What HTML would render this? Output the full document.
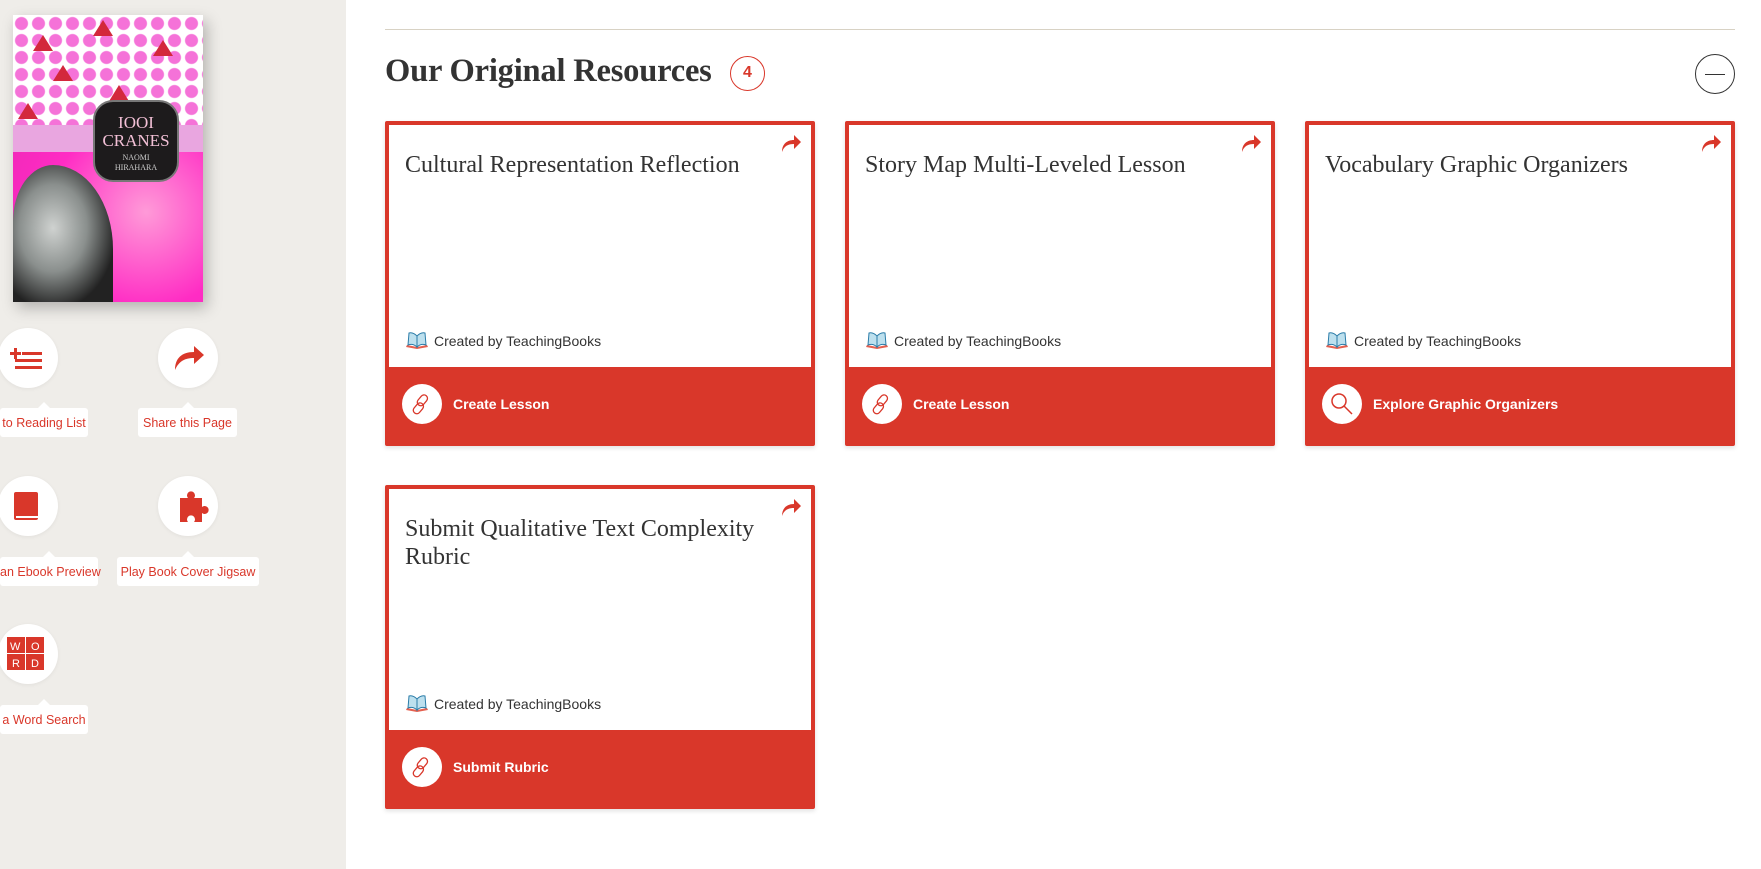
<!DOCTYPE html>
<html><head><meta charset="utf-8"><style>
*{box-sizing:border-box;margin:0;padding:0}
body{width:1761px;height:869px;overflow:hidden;background:#fff;font-family:"Liberation Sans",sans-serif;position:relative}
.side{position:absolute;left:0;top:0;width:346px;height:869px;background:#efede9}
.cover{position:absolute;left:13px;top:15px;width:190px;height:287px;box-shadow:4px 6px 14px rgba(0,0,0,.25);overflow:hidden;
background:#ff3fc8}
.dots{position:absolute;left:0;top:0;width:190px;height:110px;background-color:#fff;
background-image:radial-gradient(circle,#f572d8 6px,transparent 7px);background-size:17px 17px}
.band{position:absolute;left:0;top:110px;width:190px;height:27px;background:#e9a6e0}
.mag{position:absolute;left:0;top:137px;width:190px;height:150px;background:radial-gradient(circle at 70% 40%,#ff9ad8,#ff2cc4 60%,#f028b8)}
.face{position:absolute;left:0;top:150px;width:100px;height:140px;background:radial-gradient(ellipse at 40% 45%,#cfd2d0 0,#8a8f8d 40%,#222 75%);border-radius:40% 60% 0 0}
.lbl{position:absolute;left:80px;top:85px;width:86px;height:82px;background:#1d1b1c;border-radius:20px;border:2px solid #777;color:#f2c0d6;font-family:"Liberation Serif",serif;text-align:center;font-size:17px;line-height:18px;padding-top:12px}
.crane{position:absolute;width:0;height:0;border-left:10px solid transparent;border-right:10px solid transparent;border-bottom:16px solid #d3283c}
.ic{position:absolute;width:60px;height:60px;border-radius:50%;background:#fff;box-shadow:0 1px 4px rgba(0,0,0,.06)}
.tag{position:absolute;height:29px;background:#fff;border-radius:3px;color:#d9372a;font-size:12.5px;line-height:31px;text-align:center;white-space:nowrap}
.tag:before{content:"";position:absolute;top:-6px;left:50%;margin-left:-6px;border-left:6px solid transparent;border-right:6px solid transparent;border-bottom:6px solid #fff}
.line{position:absolute;left:385px;top:29px;width:1350px;height:1px;background:#d8d2c4}
h2{position:absolute;left:385px;top:53px;font-family:"Liberation Serif",serif;font-size:32.5px;font-weight:bold;color:#333;letter-spacing:-0.2px}
.badge{position:absolute;left:730px;top:56px;width:35px;height:35px;border:1.5px solid #d9372a;border-radius:50%;color:#d9372a;text-align:center;line-height:32px;font-size:16px;font-weight:bold}
.minus{position:absolute;left:1695px;top:54px;width:40px;height:40px;border:1.2px solid #333;border-radius:50%}
.minus:after{content:"";position:absolute;left:9px;top:19px;width:20px;height:1px;background:#333}
.card{position:absolute;width:430px;border:4px solid #d9372a;border-radius:2px;background:#fff;box-shadow:0 2px 5px rgba(0,0,0,.12)}
.card .t{position:absolute;left:16px;top:26px;right:50px;font-family:"Liberation Serif",serif;font-size:24px;line-height:28px;color:#333}
.card .sh{position:absolute;right:10px;top:10px}
.card .cb{position:absolute;left:16px;font-size:14px;color:#333}
.card .cb svg{vertical-align:-4px;margin-right:5px}
.card .ft{position:absolute;left:0;right:0;bottom:0;height:75px;background:#d9372a}
.card .ft .c{position:absolute;left:13px;top:17px;width:40px;height:40px;border-radius:50%;background:#fff}
.card .ft span{position:absolute;left:64px;top:29px;color:#fff;font-size:14px;font-weight:bold}
</style></head><body>
<div class="side">
 <div class="cover">
  <div class="dots"></div>
  <div class="crane" style="left:20px;top:20px"></div><div class="crane" style="left:80px;top:5px"></div><div class="crane" style="left:140px;top:25px"></div>
  <div class="crane" style="left:40px;top:50px"></div><div class="crane" style="left:90px;top:70px;border-bottom-width:26px;border-left-width:16px;border-right-width:16px"></div><div class="crane" style="left:5px;top:88px"></div>
  <div class="band"></div>
  <div class="mag"></div>
  <div class="face"></div>
  <div class="lbl">IOOI<br>CRANES<div style="font-size:8px;line-height:10px;color:#ccc;margin-top:3px">NAOMI<br>HIRAHARA</div></div>
 </div>
 <div class="ic" style="left:-2px;top:328px"><svg width="60" height="60"><g fill="#d9372a"><rect x="12" y="24" width="11" height="3"/><rect x="16" y="20" width="3" height="11"/><rect x="24" y="24" width="20" height="3"/><rect x="17" y="31" width="27" height="3"/><rect x="17" y="38" width="27" height="3"/></g></svg></div>
 <div class="tag" style="left:0;top:408px;width:88px">to Reading List</div>
 <div class="ic" style="left:158px;top:328px"><svg width="60" height="60"><path d="M17 42 C17 30 24 24 36 24 L36 18 L46 27 L36 36 L36 30 C27 30 21 33 17 42Z" fill="#d9372a"/></svg></div>
 <div class="tag" style="left:138px;top:408px;width:99px">Share this Page</div>
 <div class="ic" style="left:-2px;top:476px"><svg width="60" height="60"><rect x="16" y="16" width="24" height="28" rx="2" fill="#d9372a"/><rect x="18" y="40" width="22" height="2" fill="#fff"/></svg></div>
 <div class="tag" style="left:0;top:557px;width:98px">an Ebook Preview</div>
 <div class="ic" style="left:158px;top:476px"><svg width="60" height="60"><path d="M22 22h8a4 4 0 1 1 6 0h8v9a4 4 0 1 1 0 6v9h-8a4 4 0 1 0-6 0h-8z" fill="#d9372a"/></svg></div>
 <div class="tag" style="left:117px;top:557px;width:142px">Play Book Cover Jigsaw</div>
 <div class="ic" style="left:-2px;top:624px"><svg width="60" height="60" font-family="Liberation Sans" font-size="11" fill="#fff"><rect x="9" y="13" width="18" height="16" fill="#d9372a"/><rect x="28" y="13" width="18" height="16" fill="#d9372a"/><rect x="9" y="30" width="18" height="16" fill="#d9372a"/><rect x="28" y="30" width="18" height="16" fill="#d9372a"/><text x="12" y="26">W</text><text x="33" y="26">O</text><text x="14" y="43">R</text><text x="33" y="43">D</text></svg></div>
 <div class="tag" style="left:0;top:705px;width:88px">a Word Search</div>
</div>

<div class="line"></div>
<h2>Our Original Resources</h2>
<div class="badge">4</div>
<div class="minus"></div>

<svg width="0" height="0" style="position:absolute"><defs>
<symbol id="sh" viewBox="0 0 20 18"><path d="M1 17 C1 9 6 5 13 5 L13 0 L20 7 L13 14 L13 9 C7 9 3 11 1 17Z" fill="#d9372a"/></symbol>
<symbol id="bk" viewBox="0 0 24 20"><path d="M1 17 L12 19 L23 17 L22 15 L12 17 L2 15Z" fill="#e4604f"/><path d="M3 15 L4 3 Q8 2 12 6 L12 17 Q8 13 3 15Z M12 6 Q16 2 20 3 L21 15 Q16 13 12 17Z" fill="#bde0ee" stroke="#2a7ca8" stroke-width="1"/></symbol>
<symbol id="lk" viewBox="0 0 40 40"><g fill="none" stroke="#d9372a" stroke-width="1.3"><rect x="17" y="10" width="7" height="12" rx="3.5" transform="rotate(40 20 16)"/><rect x="13" y="18" width="7" height="12" rx="3.5" transform="rotate(40 16 24)"/></g></symbol>
<symbol id="mg" viewBox="0 0 40 40"><g fill="none" stroke="#d9372a" stroke-width="1.5"><circle cx="17" cy="17" r="7"/><path d="M22 22 L30 30"/></g></symbol>
</defs></svg>

<div class="card" style="left:385px;top:121px;height:325px"><svg class="sh" width="20" height="18"><use href="#sh"/></svg><div class="t">Cultural Representation Reflection</div><div class="cb" style="top:205px"><svg width="24" height="20"><use href="#bk"/></svg>Created by TeachingBooks</div><div class="ft"><div class="c"><svg width="40" height="40"><use href="#lk"/></svg></div><span>Create Lesson</span></div></div>
<div class="card" style="left:845px;top:121px;height:325px"><svg class="sh" width="20" height="18"><use href="#sh"/></svg><div class="t">Story Map Multi-Leveled Lesson</div><div class="cb" style="top:205px"><svg width="24" height="20"><use href="#bk"/></svg>Created by TeachingBooks</div><div class="ft"><div class="c"><svg width="40" height="40"><use href="#lk"/></svg></div><span>Create Lesson</span></div></div>
<div class="card" style="left:1305px;top:121px;height:325px"><svg class="sh" width="20" height="18"><use href="#sh"/></svg><div class="t">Vocabulary Graphic Organizers</div><div class="cb" style="top:205px"><svg width="24" height="20"><use href="#bk"/></svg>Created by TeachingBooks</div><div class="ft"><div class="c"><svg width="40" height="40"><use href="#mg"/></svg></div><span>Explore Graphic Organizers</span></div></div>
<div class="card" style="left:385px;top:485px;height:324px"><svg class="sh" width="20" height="18"><use href="#sh"/></svg><div class="t">Submit Qualitative Text Complexity Rubric</div><div class="cb" style="top:204px"><svg width="24" height="20"><use href="#bk"/></svg>Created by TeachingBooks</div><div class="ft"><div class="c"><svg width="40" height="40"><use href="#lk"/></svg></div><span>Submit Rubric</span></div></div>
</body></html>
